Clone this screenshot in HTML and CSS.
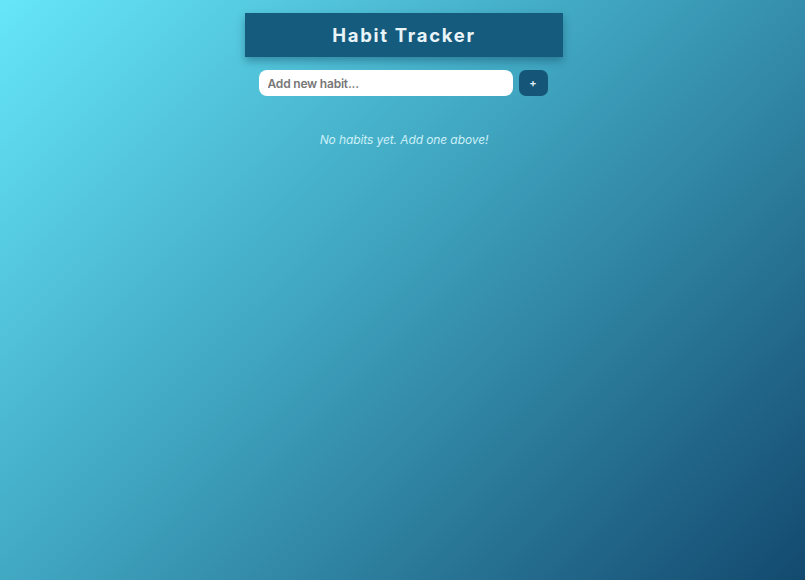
FILE: index.html
```html
<!DOCTYPE html>
<html>
<head>
<meta charset="utf-8">
<link rel="stylesheet" href="styles.css">
</head>
<body>
<div class="app">
  <h1 class="title">Habit Tracker</h1>
  <form class="add-row">
    <input class="habit-input" type="text" placeholder="Add new habit...">
    <button class="add-btn" type="button">+</button>
  </form>
  <p class="empty">No habits yet. Add one above!</p>
</div>
</body>
</html>
```
FILE: styles.css
```css
html, body {
  margin: 0;
  height: 100%;
}
body {
  background: linear-gradient(135deg, #66e6f8 0%, #3fa4bf 45%, #13496f 100%);
  font-family: Inter, "Liberation Sans", sans-serif;
  display: flex;
  justify-content: center;
}
.app {
  width: 318px;
  margin-left: 3px;
  padding-top: 13px;
  display: flex;
  flex-direction: column;
  align-items: center;
}
.title {
  margin: 0;
  width: 100%;
  height: 44px;
  box-sizing: border-box;
  background: #155b7d;
  color: #e8f4f8;
  font-size: 18.5px;
  font-weight: 700;
  letter-spacing: 1.7px;
  line-height: 45px;
  text-align: center;
  box-shadow: 0 4px 8px rgba(0, 40, 70, 0.35);
}
.add-row {
  margin-top: 13px;
  margin-right: 2px;
  display: flex;
  gap: 6px;
}
.habit-input {
  width: 254px;
  height: 26px;
  box-sizing: border-box;
  border: none;
  border-radius: 8px;
  padding: 0 9px;
  font-family: Inter, "Liberation Sans", sans-serif;
  font-size: 12px;
  font-weight: 600;
  letter-spacing: -0.2px;
  outline: none;
}
.habit-input::placeholder {
  color: #777;
}
.add-btn {
  width: 29px;
  height: 26px;
  border: none;
  border-radius: 7px;
  background: #145578;
  color: #e8f4f8;
  font-family: Inter, "Liberation Sans", sans-serif;
  font-size: 11px;
  font-weight: 600;
  padding: 0;
}
.empty {
  margin: 36px 0 0;
  font-size: 12px;
  letter-spacing: -0.1px;
  font-style: italic;
  color: #cdf0f8;
}
```
